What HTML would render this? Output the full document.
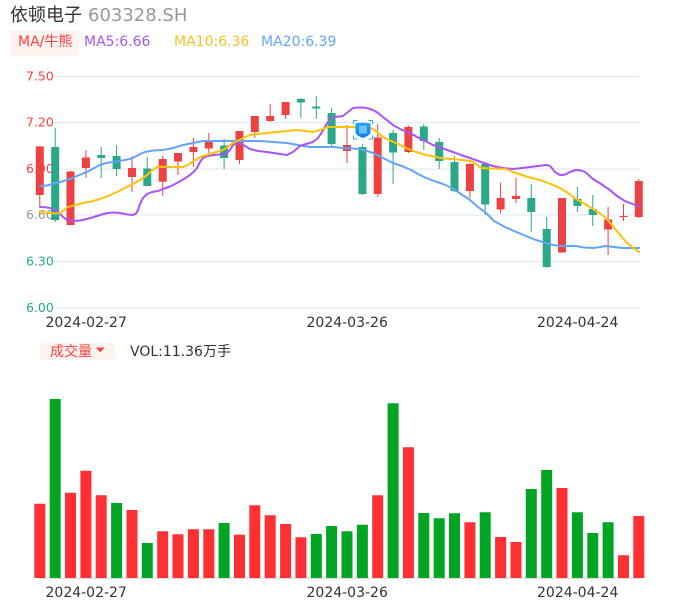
<!DOCTYPE html>
<html><head><meta charset="utf-8"><style>
html,body{margin:0;padding:0;background:#fff;width:686px;height:606px;overflow:hidden}
svg{display:block}
text{font-family:"DejaVu Sans","WenQuanYi Zen Hei","Noto Sans CJK SC",sans-serif}
</style></head><body>
<svg width="686" height="606" viewBox="0 0 686 606" xmlns="http://www.w3.org/2000/svg">
<defs><linearGradient id="g" x1="0" y1="0" x2="0" y2="1"><stop offset="0" stop-color="#1aa0ff"/><stop offset="1" stop-color="#0a84f5"/></linearGradient></defs>
<text x="10" y="21" font-size="18" fill="#333">依顿电子</text>
<text x="88" y="21" font-size="18" fill="#999">603328.SH</text>
<rect x="10" y="30" width="69" height="26" fill="#fff3ef"/>
<text x="18" y="46" font-size="14" fill="#ff4040">MA/牛熊</text>
<text x="84" y="46" font-size="14" fill="#a855f7">MA5:6.66</text>
<text x="174" y="46" font-size="14" fill="#fbbf24">MA10:6.36</text>
<text x="261" y="46" font-size="14" fill="#60a5fa">MA20:6.39</text>

<path d="M52 76.5H639M52 122.5H639M52 169H639M52 215H639M52 261.5H639M52 308H639" stroke="#e3e6f3" stroke-width="1" fill="none"/>
<g font-size="12.5">
<text x="26" y="80.5" fill="#ff4040">7.50</text>
<text x="26" y="126.5" fill="#ff4040">7.20</text>
<text x="26" y="173" fill="#ff4040">6.90</text>
<text x="26" y="219" fill="#999">6.60</text>
<text x="26" y="265.5" fill="#2ba888">6.30</text>
<text x="26" y="312" fill="#2ba888">6.00</text>
</g>

<!-- red candles -->
<path stroke="#ec4242" stroke-width="1" fill="none" d="M39.8 146V207M70.5 171V225M85.9 150V178M132 156V192M162.7 156V196M178 153V175M193.4 138V167M208.8 133V153M239.5 131V164M254.8 116V138M270.2 104V122M285.6 102V119M347 125V163M377.7 124V197M408.4 125.500V153M469.9 163V198M500.6 182.500V213.500M516 178V203M562 198V253M608.100 207V255M623.500 204V221M638.800 179V218"/>
<path fill="#ec4242" d="M35.800 146.500h8V195h-8zM66.500 171.500h8V225h-8zM81.900 157.500h8V168h-8zM128 168h8V177h-8zM158.700 159h8V181.700h-8zM174 153h8V161.500h-8zM189.400 147h8V152h-8zM204.800 141h8V148.500h-8zM235.500 131h8V160h-8zM250.800 116h8V132h-8zM266.200 116h8V121h-8zM281.600 102h8V115h-8zM343 145h8V151h-8zM373.700 137.500h8V194h-8zM404.400 127h8V152h-8zM465.900 164h8V191h-8zM496.600 198h8V209.500h-8zM512 196h8V199h-8zM558 198h8V252.500h-8zM604.100 219.500h8V229.500h-8zM619.500 216h8V217h-8zM634.800 181h8V217h-8z"/>
<!-- green candles -->
<path stroke="#2ba888" stroke-width="1" fill="none" d="M55.200 128V222M101.200 147V178M116.600 145.500V176M147.300 157V186M224.100 139V169M300.900 98V118M316.300 96V119M331.600 108V146M362.400 144V195M393.100 130V184M423.800 124V150M439.200 138V169M454.500 156V192M485.200 162V215M531.300 184V232M546.700 217V268M577.400 187V212M592.800 195V226"/>
<path fill="#2ba888" d="M51.200 147h8V220h-8zM97.200 155h8V158h-8zM112.600 156h8V169h-8zM143.300 168.500h8V186h-8zM220.100 145.500h8V158h-8zM296.900 99h8V102.500h-8zM312.300 106.500h8V108.500h-8zM327.600 113h8V144h-8zM358.400 147h8V194h-8zM389.100 133h8V152.500h-8zM419.800 126.500h8V141h-8zM435.200 142h8V161h-8zM450.500 162h8V191h-8zM481.200 164h8V204.500h-8zM527.300 198h8V212h-8zM542.700 229h8V267h-8zM573.400 199h8V206h-8zM588.800 209h8V215h-8z"/>

<g fill="none" stroke-width="2" stroke-linejoin="round" stroke-linecap="round">
<polyline stroke="#60a5fa" points="40,186 47,185.500 55,183 62,181.500 70,179 78,175.500 87,172 94,168 100,165 106,163 113,162 122,160.500 130,159 135,157 140,154 145,152 153,150.500 163,150 173,148 183,145 193,143 203,141 218,141 233,141 246,141 260,141 273,142 287,143 298,145 310,147 322,147 333,147 343,148 352,148.500 360,149 367,151 373,153 383,158 393,163 402,166 411,170 418,174 426,178 434,181 443,184 452,188 461,194 470,200 478,207 486,213 494,221 503,226 514,231 526,236 536,240 546,243 553,245 560,246 568,246 576,246 584,247.500 593,248 600,247 606,246 614,247 623,248 631,248 639,248"/>
<polyline stroke="#a855f7" points="40,207 45,207.200 50,208 55,210 58,212 62,216 67,220 73,221 80,220.500 87,219 97,216 107,213 114,212.500 120,213 127,214.500 133,215 136,213.500 138,210 140,204 143,198 147,194 152,192 158,191 163,189 170,186.500 177,183 184,179 190,175 194,171.500 197,168 200,162 203,158 208,156 213,155 220,154.500 226,154 230,150 233,145 236,143.500 240,143 245,146 250,149 258,151 267,152 277,153.500 287,155 293,152 300,146 306,144 313,142 318,138 322,132 326,125 330,119 335,117 343,116 348,112 353,108 358,107.500 363,107.500 368,108.300 373,110 378,113 383,117 388,121 393,125 401,129.500 410,133 421,139 433,145 443,148.500 453,152 461,155 470,158 481,162 493,166 503,168 513,169 522,168 530,167 538,166 546,165 549,165.500 551,167 555,172 560,175 563,175 566,174 571,171.500 576,170 581,170.500 585,172 589,175.500 593,179 601,184 610,190 615,194.500 620,198 625,201 630,203 635,205 639,206"/>
<polyline stroke="#ffc107" points="40,211 45,212.500 50,213 55,213.500 60,213 64,210 68,207 75,205 83,203 91,201.500 100,199 108,196 117,192 125,188 133,184 140,180 147,175 152,170.500 157,167 162,166.700 167,167 175,167 183,167 188,165 192,162 197,159 203,156 213,153 223,150 228,147 233,143 241,139 250,135 258,134 267,133 282,131.500 297,130 306,131 313,132 320,130 328,127 335,127 343,127 350,127 356,127 371,128 377,132 383,137 389,140 396,143 406,148 416,152 426,155 436,157 444,158.500 453,159 462,160 471,161 476,164 481,168 493,168.500 506,169 513,172 528,177 543,181 552,184.500 560,188 568,193 576,199 585,204 593,209 600,213.500 606,218 611,224 616,230 621,236 626,242 632,247 639,252"/>
</g>

<!-- marker icon -->
<path d="M353.500 124v-3.500h4M368.500 120.500h4v3.500M353.500 135.500v3.500h4M368.500 139h4v-3.500" fill="none" stroke="#2aa8ff" stroke-width="1"/>
<path d="M355.500 123.500q7.500-1.500 15 0v8q0 4-7.500 6.500q-7.500-2.500-7.500-6.500z" fill="url(#g)"/>
<rect x="359" y="125.500" width="8" height="8" fill="#6ec3ff"/>

<text x="45.500" y="327" font-size="14" fill="#333">2024-02-27</text>
<text x="306.500" y="327" font-size="14" fill="#333">2024-03-26</text>
<text x="537" y="327" font-size="14" fill="#333">2024-04-24</text>

<rect x="40" y="343" width="75" height="17" fill="#fff3ef"/>
<text x="50" y="356" font-size="14" fill="#ff4040">成交量</text>
<path d="M96 347.500h8.500l-4.200 5z" fill="#ff4040"/>
<text x="130" y="356" font-size="14" fill="#333">VOL:11.36万手</text>

<path d="M40 578.500H639" stroke="#ddd" stroke-width="1"/>
<path fill="#ff3033" d="M34.300 503.700h11V578h-11zM65 492.700h11V578H65zM80.400 470.700h11V578h-11zM95.700 495.300h11V578h-11zM126.500 510h11V578h-11zM157.200 531.300h11V578h-11zM172.500 534.300h11V578h-11zM187.900 529.300h11V578h-11zM203.300 529.300h11V578h-11zM234 534.700h11V578H234zM249.300 505.300h11V578h-11zM264.700 515.300h11V578h-11zM280.100 524h11V578h-11zM295.400 537.300h11V578h-11zM372.200 495.300h11V578h-11zM402.900 447.300h11V578h-11zM464.400 522.300h11V578h-11zM495.100 537h11V578h-11zM510.500 542h11V578h-11zM556.500 488h11V578h-11zM618 555.300h11V578H618zM633.300 516h11V578h-11z"/>
<path fill="#00a524" d="M49.700 399h11V578h-11zM111.100 503h11V578h-11zM141.800 543h11V578h-11zM218.600 523h11V578h-11zM310.800 534h11V578h-11zM326.100 526h11V578h-11zM341.500 531.300h11V578h-11zM356.900 524.700h11V578h-11zM387.600 403.300h11V578h-11zM418.300 513h11V578h-11zM433.700 518.300h11V578h-11zM449 513.300h11V578H449zM479.700 512.300h11V578h-11zM525.800 489h11V578h-11zM541.200 470h11V578h-11zM571.900 512.300h11V578h-11zM587.300 533h11V578h-11zM602.600 522.300h11V578h-11z"/>

<text x="45.500" y="597" font-size="14" fill="#333">2024-02-27</text>
<text x="306.500" y="597" font-size="14" fill="#333">2024-03-26</text>
<text x="537" y="597" font-size="14" fill="#333">2024-04-24</text>
</svg>
</body></html>
